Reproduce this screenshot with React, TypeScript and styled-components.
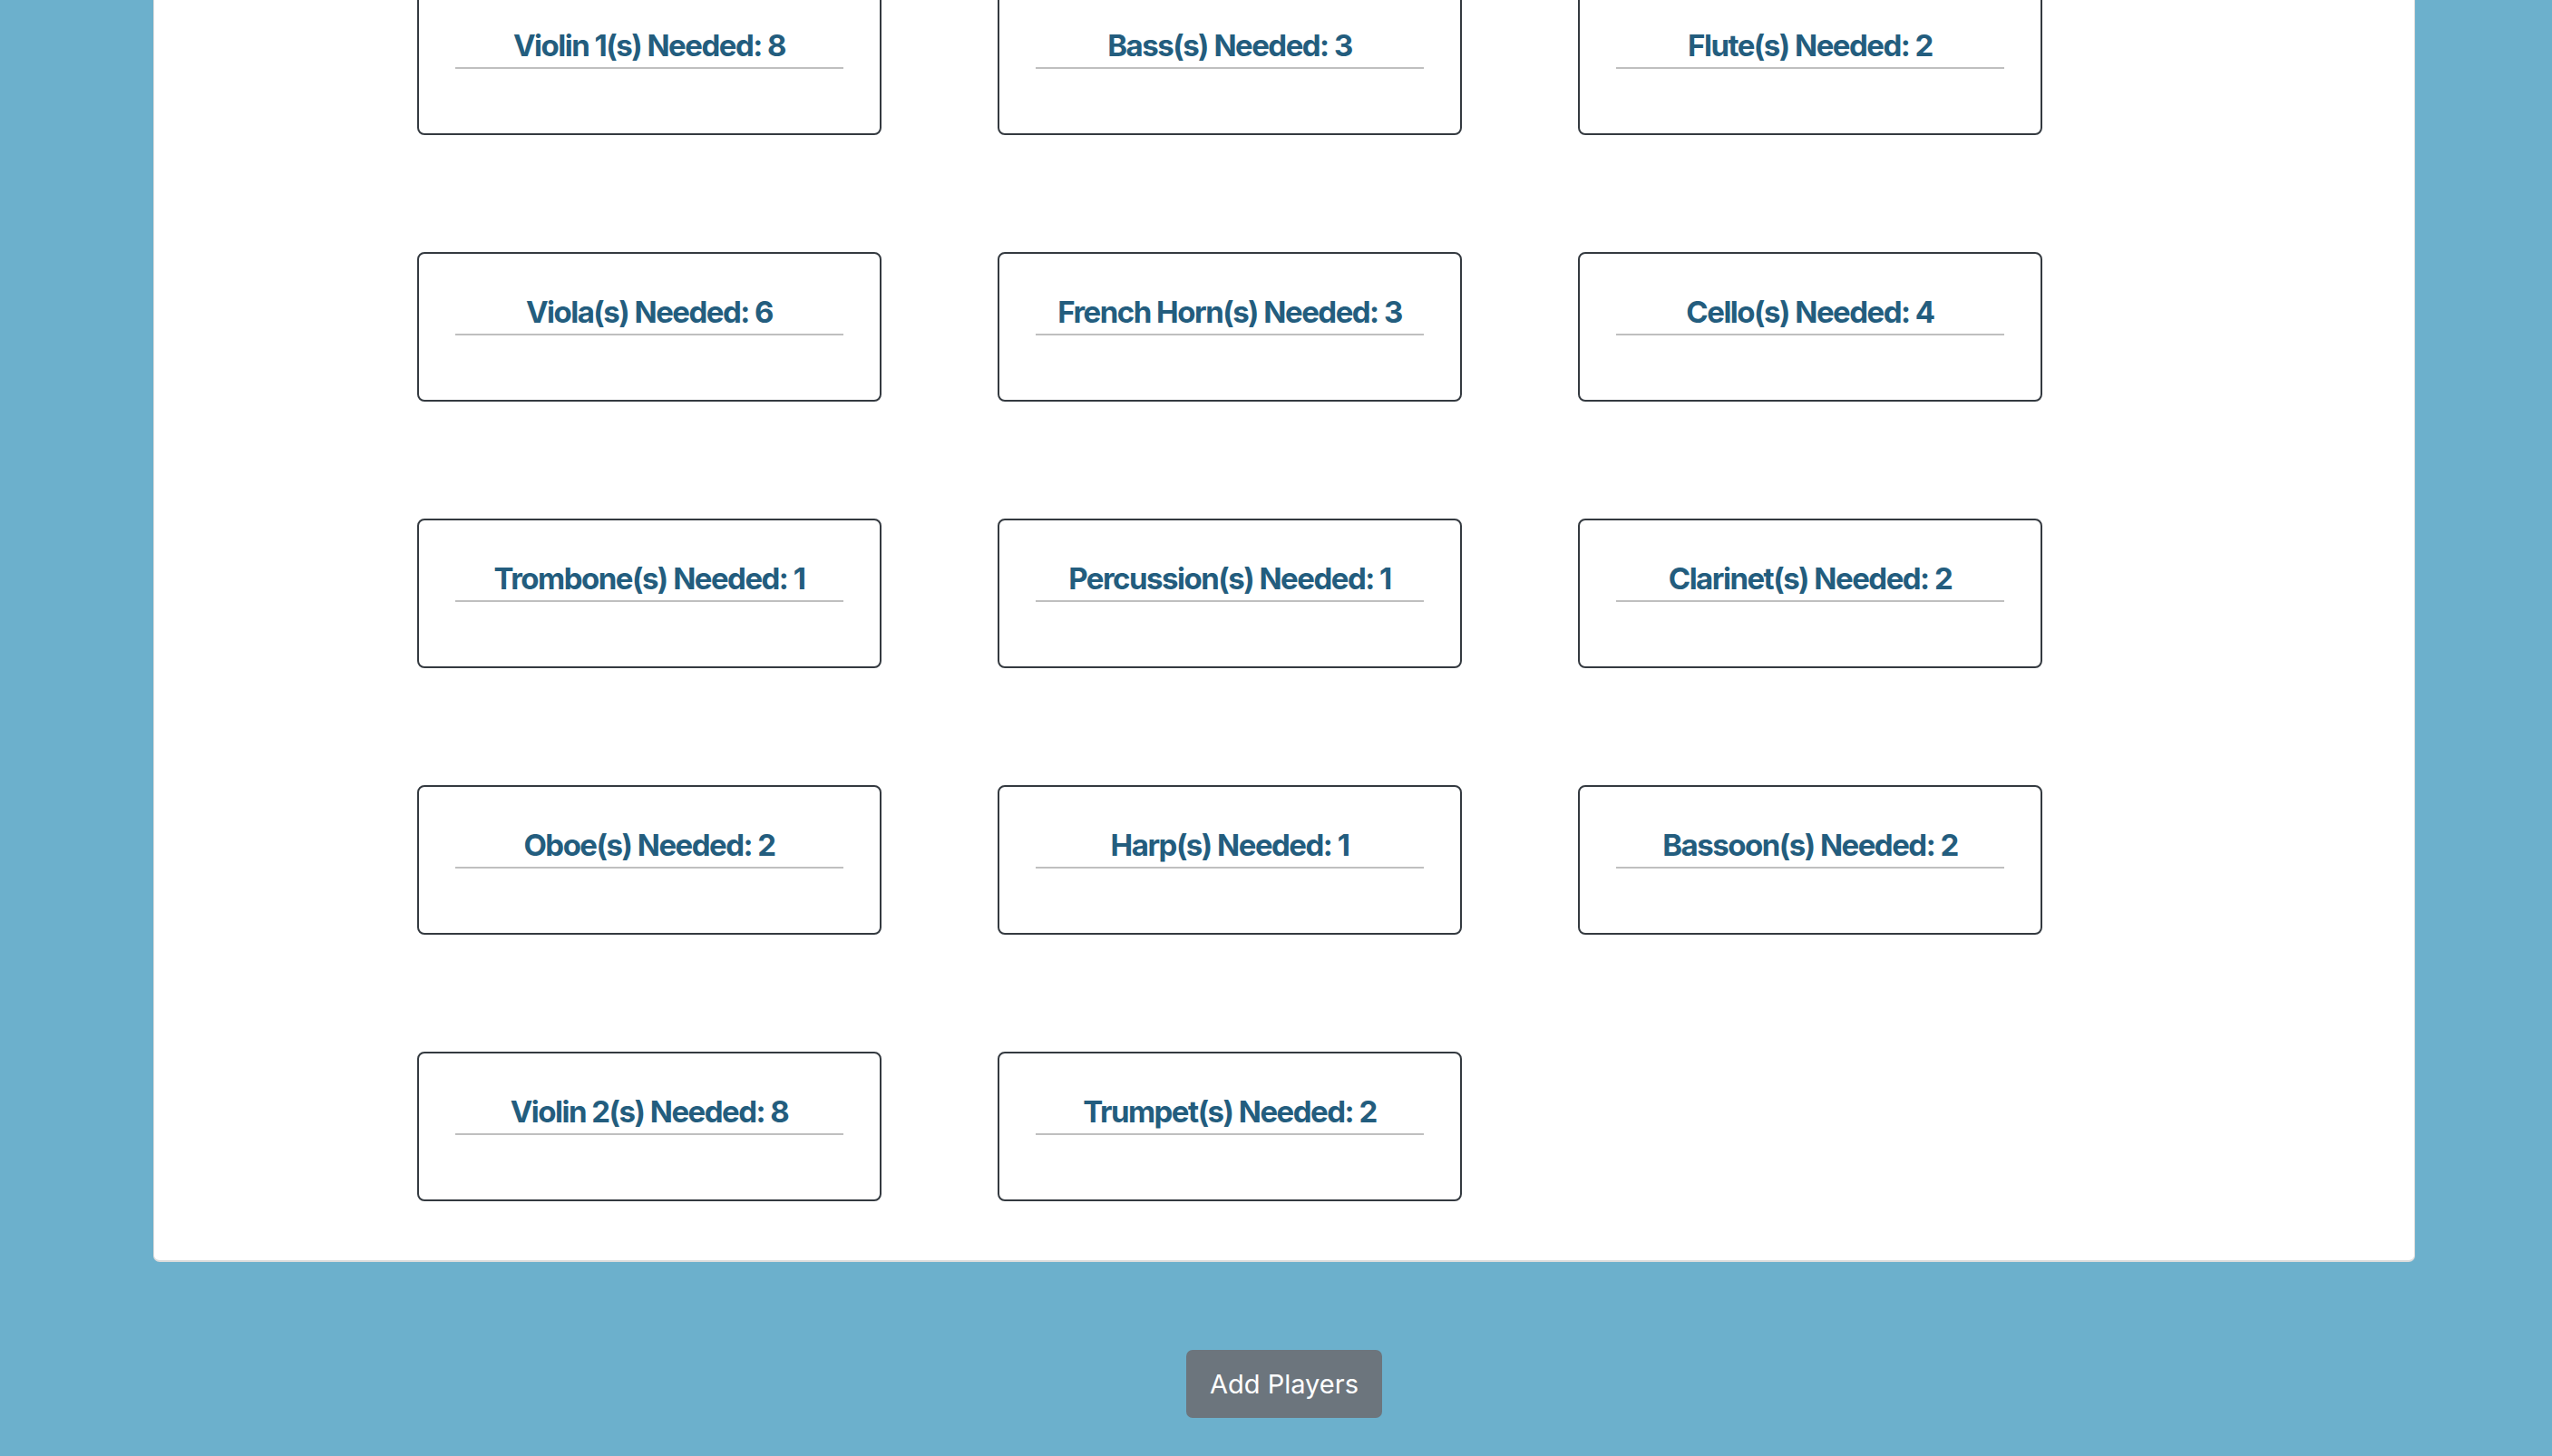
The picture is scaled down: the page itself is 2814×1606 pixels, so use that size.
import React from "react";
import styled, { createGlobalStyle } from "styled-components";

const GlobalStyle = createGlobalStyle`
  html, body {
    margin: 0;
    padding: 0;
    background: #6cb0cc;
    overflow: hidden;
  }
  body {
    font-family: Inter, "Noto Sans", "Liberation Sans", sans-serif;
  }
`;

const Page = styled.div`
  height: 1606px;
  overflow: hidden;
  padding: 0 151px 0 169px;
  box-sizing: border-box;
  display: flex;
  flex-direction: column;
  align-items: stretch;
`;

const Panel = styled.section`
  margin-top: -60px;
  background: #ffffff;
  border: 1px solid #dcdcdc;
  border-bottom-width: 2px;
  border-radius: 7px;
  padding: 43px 0 65px 290px;
  box-sizing: border-box;
`;

const Grid = styled.div`
  display: grid;
  grid-template-columns: repeat(3, 512px);
  column-gap: 128px;
  row-gap: 129px;
`;

const Card = styled.div`
  box-sizing: border-box;
  height: 165px;
  border: 2px solid #343a40;
  border-radius: 8px;
  padding: 44px 40px 0;
  background: #fff;
`;

const Title = styled.h5`
  margin: 0;
  padding: 0 0 4px;
  font-family: Inter, "Noto Sans", "Liberation Sans", sans-serif;
  font-size: 33px;
  line-height: 40px;
  font-weight: 700;
  color: #235d7e;
  text-align: center;
  white-space: nowrap;
  border-bottom: 2px solid #bfbfbf;
  letter-spacing: -1.5px;
`;

const Footer = styled.div`
  display: flex;
  justify-content: center;
  padding-top: 97px;
`;

const Button = styled.button`
  width: 216px;
  height: 75px;
  border: none;
  border-radius: 7px;
  background: #6c757d;
  color: #ffffff;
  font-family: Inter, "Noto Sans", "Liberation Sans", sans-serif;
  font-size: 29px;
  font-weight: 400;
  cursor: pointer;
  padding: 0;
`;

const sections: [string, number][] = [
  ["Violin 1", 8],
  ["Bass", 3],
  ["Flute", 2],
  ["Viola", 6],
  ["French Horn", 3],
  ["Cello", 4],
  ["Trombone", 1],
  ["Percussion", 1],
  ["Clarinet", 2],
  ["Oboe", 2],
  ["Harp", 1],
  ["Bassoon", 2],
  ["Violin 2", 8],
  ["Trumpet", 2],
];

export default function App() {
  return (
    <>
      <GlobalStyle />
      <Page>
        <Panel>
          <Grid>
            {sections.map(([name, n]) => (
              <Card key={name}>
                <Title>
                  {name}(s) Needed: {n}
                </Title>
              </Card>
            ))}
          </Grid>
        </Panel>
        <Footer>
          <Button>Add Players</Button>
        </Footer>
      </Page>
    </>
  );
}
